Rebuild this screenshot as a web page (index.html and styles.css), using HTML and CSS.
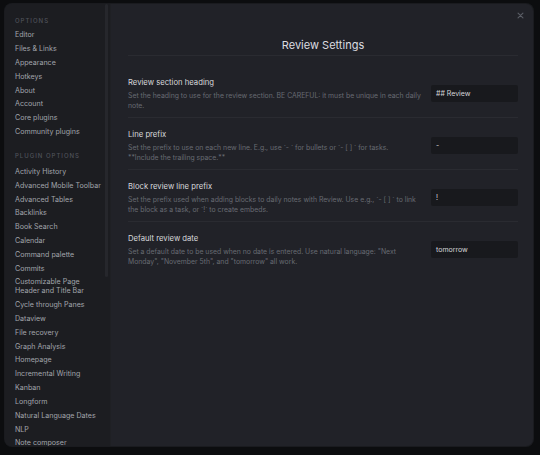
FILE: index.html
```html
<!DOCTYPE html>
<html>
<head>
<meta charset="utf-8">
<link rel="stylesheet" href="styles.css">
</head>
<body>
<div class="modal">
  <nav class="sidebar">
    <div class="scrollbar"></div>
    <div class="group-title first">Options</div>
    <div class="nav-item">Editor</div>
    <div class="nav-item">Files &amp; Links</div>
    <div class="nav-item">Appearance</div>
    <div class="nav-item">Hotkeys</div>
    <div class="nav-item">About</div>
    <div class="nav-item">Account</div>
    <div class="nav-item">Core plugins</div>
    <div class="nav-item">Community plugins</div>
    <div class="group-title">Plugin options</div>
    <div class="nav-item">Activity History</div>
    <div class="nav-item">Advanced Mobile Toolbar</div>
    <div class="nav-item">Advanced Tables</div>
    <div class="nav-item">Backlinks</div>
    <div class="nav-item">Book Search</div>
    <div class="nav-item">Calendar</div>
    <div class="nav-item">Command palette</div>
    <div class="nav-item">Commits</div>
    <div class="nav-item">Customizable Page Header and Title Bar</div>
    <div class="nav-item">Cycle through Panes</div>
    <div class="nav-item">Dataview</div>
    <div class="nav-item">File recovery</div>
    <div class="nav-item">Graph Analysis</div>
    <div class="nav-item">Homepage</div>
    <div class="nav-item">Incremental Writing</div>
    <div class="nav-item">Kanban</div>
    <div class="nav-item">Longform</div>
    <div class="nav-item">Natural Language Dates</div>
    <div class="nav-item">NLP</div>
    <div class="nav-item">Note composer</div>
  </nav>
  <main class="content">
    <div class="close">
      <svg width="7" height="7" viewBox="0 0 10 10"><path d="M1.5 1.5 L8.5 8.5 M8.5 1.5 L1.5 8.5" stroke="#5a5d65" stroke-width="1.6" stroke-linecap="round"/></svg>
    </div>
    <h2 class="title">Review Settings</h2>
    <div class="setting first">
      <div class="info">
        <div class="name">Review section heading</div>
        <div class="desc">Set the heading to use for the review section. BE CAREFUL: it must be unique in each daily note.</div>
      </div>
      <div class="control"><div class="input">## Review</div></div>
    </div>
    <div class="setting">
      <div class="info">
        <div class="name">Line prefix</div>
        <div class="desc">Set the prefix to use on each new line. E.g., use `- ` for bullets or `- [ ] ` for tasks. <span class="keep">**Include the trailing space.**</span></div>
      </div>
      <div class="control"><div class="input">-</div></div>
    </div>
    <div class="setting">
      <div class="info">
        <div class="name">Block review line prefix</div>
        <div class="desc">Set the prefix used when adding blocks to daily notes with Review. Use e.g., `- [ ] ` to link the block as a task, or `!` to create embeds.</div>
      </div>
      <div class="control"><div class="input">!</div></div>
    </div>
    <div class="setting">
      <div class="info">
        <div class="name">Default review date</div>
        <div class="desc">Set a default date to be used when no date is entered. Use natural language: "Next Monday", "November 5th", and "tomorrow" all work.</div>
      </div>
      <div class="control"><div class="input">tomorrow</div></div>
    </div>
  </main>
</div>
</body>
</html>
```
FILE: styles.css
```css
html, body {
  margin: 0;
  padding: 0;
  background: #0c0d0f;
  width: 540px;
  height: 455px;
  overflow: hidden;
  font-family: Inter, "Noto Sans", sans-serif;
}
body {
  padding: 4px 7px 9px 5px;
  box-sizing: border-box;
}
.modal {
  width: 528px;
  height: 442px;
  border-radius: 7px;
  overflow: hidden;
  display: flex;
  background: #212228;
  box-shadow: 0 0 0 1px #1a1b1f;
}
.sidebar {
  position: relative;
  width: 106px;
  flex: none;
  background: #1c1d21;
  padding: 12px 0 0 10px;
  box-sizing: border-box;
  border-right: 1px solid #1f2024;
}
.scrollbar {
  position: absolute;
  right: 2px;
  top: 0;
  width: 3px;
  height: 273px;
  border-radius: 2px;
  background: #26272c;
}
.group-title {
  font-size: 6px;
  line-height: 9px;
  letter-spacing: 1px;
  text-transform: uppercase;
  color: #4f525a;
  font-weight: 500;
  margin: 12.5px 0 4.5px;
}
.group-title.first {
  margin-top: 0;
  margin-bottom: 3px;
}
.nav-item {
  font-size: 7.1px;
  line-height: 9px;
  padding: 2.42px 0;
  color: #a2a5ac;
  width: 88px;
}
.content {
  position: relative;
  flex: 1;
  padding: 33px 15px 0 17px;
}
.close {
  position: absolute;
  top: 8px;
  right: 9px;
  width: 7px;
  height: 7px;
  display: flex;
}
.title {
  margin: 0 0 10px;
  font-size: 11px;
  line-height: 16px;
  font-weight: 400;
  text-align: center;
  color: #dcdde0;
  padding-bottom: 2px;
  border-bottom: 1px solid #2a2b31;
}
.setting {
  display: flex;
  align-items: center;
  padding: 11px 0 7px;
  border-top: 1px solid #2a2b31;
}
.setting.first {
  border-top: none;
}
.info {
  flex: 1;
  padding-right: 9px;
}
.name {
  font-size: 7.7px;
  line-height: 11px;
  color: #d8d9dc;
}
.desc {
  margin-top: 3px;
  font-size: 6.86px;
  line-height: 9.5px;
  color: #676a72;
}
.keep {
  white-space: nowrap;
}
.control {
  flex: none;
}
.input {
  width: 87px;
  height: 17px;
  box-sizing: border-box;
  background: #18191d;
  border-radius: 2px;
  padding-left: 5px;
  font-size: 7px;
  line-height: 17px;
  color: #d6d7da;
}
```
